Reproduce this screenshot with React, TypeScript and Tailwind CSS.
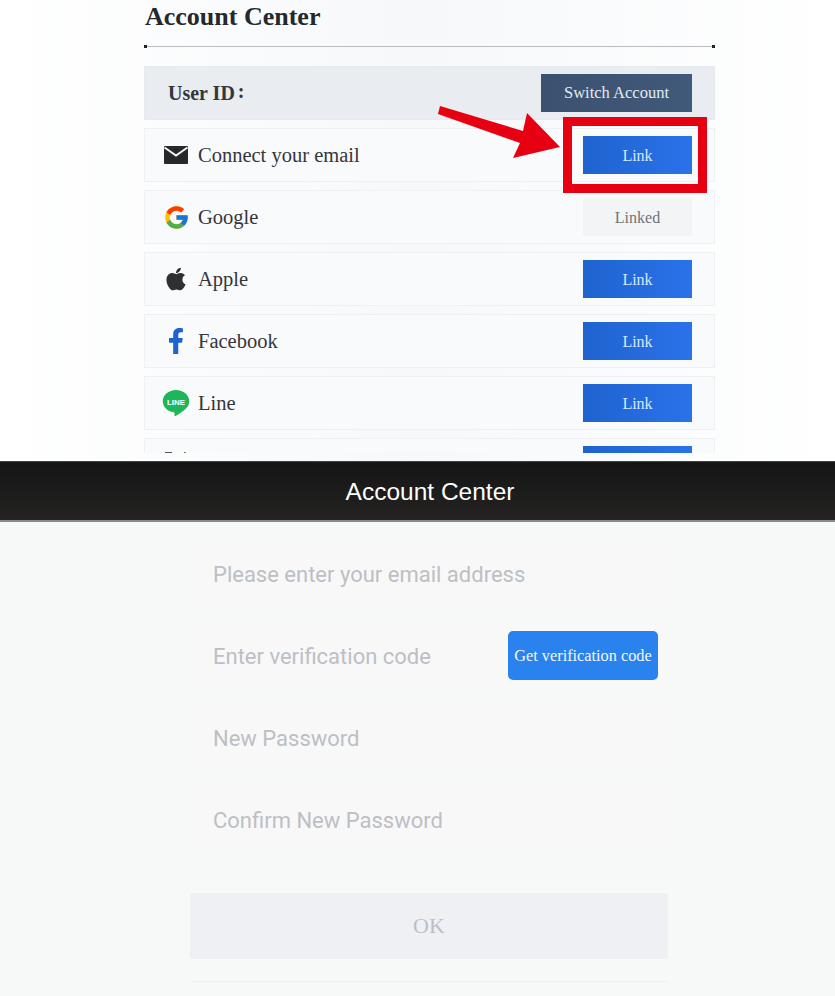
import React from 'react'
import { FcGoogle } from 'react-icons/fc'
import { FaApple, FaFacebookF } from 'react-icons/fa'

const serif = { fontFamily: '"Liberation Serif", serif' }

const MailIcon = () => (
  <svg width="24" height="18" viewBox="0 0 24 18">
    <rect width="24" height="18" rx="1" fill="#26282c" />
    <path d="M0.500 1.500 12 9.500 23.500 1.500" fill="none" stroke="#f8f9fb" strokeWidth="2" />
  </svg>
)

const LineIcon = () => (
  <svg width="28" height="28" viewBox="0 0 28 28">
    <path d="M14 1C6.6 1 .8 6 .8 12.2c0 5.6 4.6 10.2 10.9 11.1.6.1.9.5.9 1l-.1 2.2c0 .6.5.9 1 .6 3-1.700 8.700-5.300 11.300-8.500 1.700-1.900 2.400-4 2.400-6.400C27.200 6 21.400 1 14 1z" fill="#1fb65a" />
    <text x="14" y="15.500" textAnchor="middle" fontSize="8" fontWeight="700" fill="#ffffff" fontFamily="Liberation Sans, sans-serif">LINE</text>
  </svg>
)

const LinkButton = () => (
  <div className="flex h-[38px] w-[109px] items-center justify-center bg-gradient-to-r from-[#1f63cf] to-[#2a72ea] pt-px text-[16px] text-[#d5eafc]">
    Link
  </div>
)

const LinkedButton = () => (
  <div className="flex h-[38px] w-[109px] items-center justify-center bg-[#f2f4f6] pt-px text-[16px] text-[#6f7378]">
    Linked
  </div>
)

const rows = [
  { name: 'Connect your email', icon: <MailIcon />, linked: false },
  { name: 'Google', icon: <FcGoogle size={27} />, linked: true },
  { name: 'Apple', icon: <FaApple size={26} color="#2e3033" />, linked: false },
  { name: 'Facebook', icon: <FaFacebookF size={26} color="#1e63cf" />, linked: false },
  { name: 'Line', icon: <LineIcon />, linked: false },
]

const fields = ['Please enter your email address', 'Enter verification code', 'New Password', 'Confirm New Password']

export default function App() {
  return (
    <div className="h-[996px] w-[835px] overflow-hidden bg-[#f7f8f8]">
      {/* top half: link list */}
      <div className="relative h-[461px] bg-gradient-to-r from-white via-[#f6f8fa] to-white" style={serif}>
        <div className="ml-[144px] h-[453px] w-[571px] overflow-hidden">
          <h1 className="ml-px h-[34px] text-[26px] font-bold leading-[34px] text-[#25282c]">Account Center</h1>
          <div className="mt-[10px] flex h-[4px] items-center">
            <span className="h-[3px] w-[3px] bg-[#222222]" />
            <span className="h-px flex-1 bg-[#b9bdc2]" />
            <span className="h-[3px] w-[3px] bg-[#222222]" />
          </div>
          <div className="mt-[18px] flex flex-col gap-2">
            <div className="flex h-[54px] items-center justify-between border border-[#e6e9ed] bg-[#e9ecf0] pl-[23px] pr-[22px]">
              <span className="text-[20px] font-bold text-[#33373d]">User ID<span className="relative -top-[2px] ml-[3px]">:</span></span>
              <div className="flex h-[38px] w-[151px] items-center justify-center bg-gradient-to-r from-[#3b5170] to-[#41597a] pt-px text-[16.500px] text-[#e4ecf4]">
                Switch Account
              </div>
            </div>
            {rows.map((row) => (
              <div key={row.name} className="flex h-[54px] shrink-0 items-center border border-[#eef0f3] bg-[#f9fafb] pr-[22px]">
                <span className="flex w-[53px] items-center justify-center pl-[9px]">{row.icon}</span>
                <span className="flex-1 text-[20.500px] text-[#33363b]">{row.name}</span>
                {row.linked ? <LinkedButton /> : <LinkButton />}
              </div>
            ))}
            {/* last row is cut off by the bar, only the tops of its content show */}
            <div className="flex h-[54px] shrink-0 justify-between border border-[#eef0f3] bg-[#f9fafb] pr-[22px] pt-[7px]">
              <div className="flex items-start gap-3 pl-5 pt-[6px]">
                <span className="h-px w-[7px] bg-[#555555]" />
                <span className="h-px w-[2px] bg-[#777777]" />
              </div>
              <div className="h-[38px] w-[109px] bg-gradient-to-r from-[#1f63cf] to-[#2a72ea]" />
            </div>
          </div>
        </div>

        {/* red highlight drawn over the screenshot */}
        <div className="absolute left-[563px] top-[117px] h-[76px] w-[144px] border-[9px] border-[#e60012]" />
        <svg className="absolute left-[430px] top-[100px]" width="140" height="70" viewBox="0 0 140 70">
          <polygon points="10,6 8,14 90,43 83,58 130,47 97,13 93,31" fill="#e60012" />
        </svg>
      </div>

      {/* dark title bar */}
      <div className="flex h-[61px] items-center justify-center border-t border-b-2 border-t-[#444444] border-b-[#8a8a8a] bg-gradient-to-b from-[#151515] to-[#242322] pl-[25px] pt-[2px] text-[24.500px] font-medium text-white" style={{ fontFamily: '"Liberation Sans", sans-serif' }}>
        Account Center
      </div>

      {/* bottom half: email form */}
      <div className="ml-[190px] w-[478px] pt-[18px]">
        <div className="flex flex-col gap-[14px]">
          {fields.map((label, i) => (
            <div key={label} className="flex h-[68px] items-center justify-between bg-[#f8f8f9] pl-[23px] pr-[10px]">
              <span className="text-[22px] text-[#bcbfc4]" style={{ fontFamily: 'Roboto, sans-serif' }}>{label}</span>
              {i === 1 && (
                <div className="-mt-px flex h-[49px] w-[150px] items-center justify-center rounded-[5px] bg-[#2a82ee] pt-px text-[16.300px] text-[#f2f8ff]" style={serif}>
                  Get verification code
                </div>
              )}
            </div>
          ))}
        </div>
        <div className="mt-[39px] flex h-[66px] items-center justify-center rounded-[3px] bg-[#eff0f4] pb-[2px] text-[22px] text-[#bcbfc5]" style={serif}>
          OK
        </div>
        <div className="mt-[22px] h-px bg-[#eff0f2]" />
      </div>
    </div>
  )
}
